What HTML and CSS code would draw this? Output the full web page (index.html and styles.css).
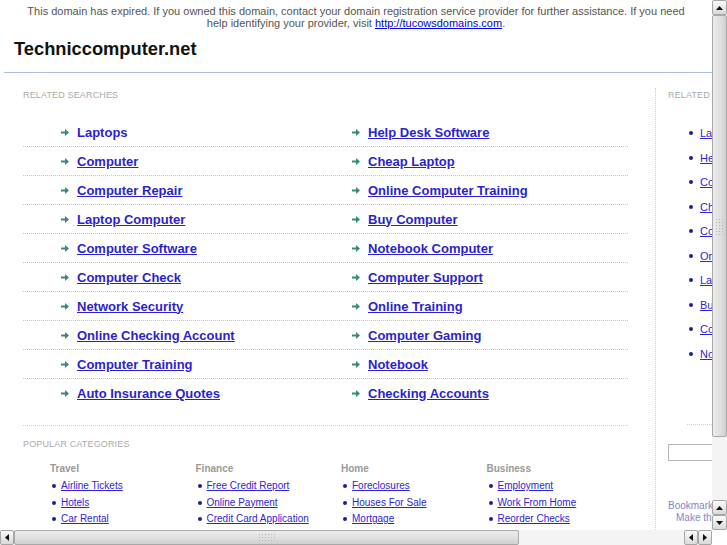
FILE: index.html
```html
<!DOCTYPE html>
<html>
<head>
<meta charset="utf-8">
<title>Techniccomputer.net</title>
<link rel="stylesheet" href="styles.css">
</head>
<body>
<div class="viewport">
  <div class="page">
    <div class="notice">This domain has expired. If you owned this domain, contact your domain registration service provider for further assistance. If you need help identifying your provider, visit <a href="#">http://tucowsdomains.com</a>.</div>
    <div class="header"><h1 class="site-title">Techniccomputer.net</h1></div>
    <div class="main">
      <div class="content">
        <div class="section-title">Related Searches</div>
        <div class="searches">
          <div class="row"><a class="s-link nou" href="#">Laptops</a><a class="s-link" href="#">Help Desk Software</a></div>
          <div class="row"><a class="s-link" href="#">Computer</a><a class="s-link" href="#">Cheap Laptop</a></div>
          <div class="row"><a class="s-link" href="#">Computer Repair</a><a class="s-link" href="#">Online Computer Training</a></div>
          <div class="row"><a class="s-link" href="#">Laptop Computer</a><a class="s-link" href="#">Buy Computer</a></div>
          <div class="row"><a class="s-link" href="#">Computer Software</a><a class="s-link" href="#">Notebook Computer</a></div>
          <div class="row"><a class="s-link" href="#">Computer Check</a><a class="s-link" href="#">Computer Support</a></div>
          <div class="row"><a class="s-link" href="#">Network Security</a><a class="s-link" href="#">Online Training</a></div>
          <div class="row"><a class="s-link" href="#">Online Checking Account</a><a class="s-link" href="#">Computer Gaming</a></div>
          <div class="row"><a class="s-link" href="#">Computer Training</a><a class="s-link" href="#">Notebook</a></div>
          <div class="row last"><a class="s-link" href="#">Auto Insurance Quotes</a><a class="s-link" href="#">Checking Accounts</a></div>
        </div>
        <div class="section-title pop">Popular Categories</div>
        <div class="cats">
          <div class="cat">
            <div class="cat-head">Travel</div>
            <a class="c-link" href="#">Airline Tickets</a>
            <a class="c-link" href="#">Hotels</a>
            <a class="c-link" href="#">Car Rental</a>
          </div>
          <div class="cat">
            <div class="cat-head">Finance</div>
            <a class="c-link" href="#">Free Credit Report</a>
            <a class="c-link" href="#">Online Payment</a>
            <a class="c-link" href="#">Credit Card Application</a>
          </div>
          <div class="cat">
            <div class="cat-head">Home</div>
            <a class="c-link" href="#">Foreclosures</a>
            <a class="c-link" href="#">Houses For Sale</a>
            <a class="c-link" href="#">Mortgage</a>
          </div>
          <div class="cat">
            <div class="cat-head">Business</div>
            <a class="c-link" href="#">Employment</a>
            <a class="c-link" href="#">Work From Home</a>
            <a class="c-link" href="#">Reorder Checks</a>
          </div>
        </div>
      </div>
      <div class="sidebar">
        <div class="section-title side">Related Searches</div>
        <div class="side-list">
          <a class="c-link side-link" href="#">Laptops</a>
          <a class="c-link side-link" href="#">Help Desk Software</a>
          <a class="c-link side-link" href="#">Computer</a>
          <a class="c-link side-link" href="#">Cheap Laptop</a>
          <a class="c-link side-link" href="#">Computer Repair</a>
          <a class="c-link side-link" href="#">Online Computer Training</a>
          <a class="c-link side-link" href="#">Laptop Computer</a>
          <a class="c-link side-link" href="#">Buy Computer</a>
          <a class="c-link side-link" href="#">Computer Software</a>
          <a class="c-link side-link" href="#">Notebook Computer</a>
        </div>
        <div class="side-search"><input class="side-input" type="text"></div>
        <div class="bookmark">Bookmark this page</div>
        <div class="homepage">Make this your homepage</div>
      </div>
    </div>
  </div>

  <div class="vscroll">
    <div class="sb-btn"><svg width="7" height="4" viewBox="0 0 7 4"><path d="M0 4L3.5 0L7 4Z" fill="#111"/></svg></div>
    <div class="v-thumb"><div class="grip v-grip"></div></div>
    <div class="v-track"></div>
    <div class="sb-btn"><svg width="7" height="4" viewBox="0 0 7 4"><path d="M0 4L3.5 0L7 4Z" fill="#111"/></svg></div>
    <div class="sb-btn"><svg width="7" height="4" viewBox="0 0 7 4"><path d="M0 0L3.5 4L7 0Z" fill="#111"/></svg></div>
  </div>
  <div class="hscroll">
    <div class="sb-btn h"><svg width="4" height="7" viewBox="0 0 4 7"><path d="M4 0L0 3.5L4 7Z" fill="#111"/></svg></div>
    <div class="h-thumb"><div class="grip h-grip"></div></div>
    <div class="h-track"></div>
    <div class="sb-btn h"><svg width="4" height="7" viewBox="0 0 4 7"><path d="M4 0L0 3.5L4 7Z" fill="#111"/></svg></div>
    <div class="sb-btn h"><svg width="4" height="7" viewBox="0 0 4 7"><path d="M0 0L4 3.5L0 7Z" fill="#111"/></svg></div>
  </div>
  <div class="corner"></div>
</div>
</body>
</html>
```

FILE: styles.css
```css
html, body {
  margin: 0;
  padding: 0;
  width: 727px;
  height: 545px;
  overflow: hidden;
  background: #fff;
  font-family: "Liberation Sans", Arial, sans-serif;
}

.viewport {
  position: relative;
  width: 727px;
  height: 545px;
  overflow: hidden;
}

.page {
  width: 712px;
  height: 530px;
  overflow: hidden;
}

.notice {
  width: 676px;
  margin: 0 auto;
  padding-top: 5px;
  font-size: 11px;
  line-height: 12px;
  color: #555;
  text-align: center;
}

.notice a {
  color: #0000ee;
}

.header {
  margin-left: 4px;
  width: 900px;
  border-bottom: 1px solid #a9bde3;
  padding: 9px 0 0 10px;
  height: 34px;
}

.site-title {
  margin: 0;
  font-size: 18.3px;
  line-height: 22px;
  font-weight: bold;
  color: #111;
}

.main {
  display: flex;
  margin-left: 4px;
  margin-top: 15px;
  width: 900px;
}

.content {
  width: 651px;
  flex: none;
}

.section-title {
  font-size: 9px;
  line-height: 12px;
  color: #aaa;
  text-transform: uppercase;
  letter-spacing: 0.15px;
  margin-left: 19px;
  margin-top: 1px;
}

.searches {
  margin-left: 19px;
  margin-top: 17px;
  width: 605px;
  padding-bottom: 18px;
  border-bottom: 1px dotted #c3d0ec;
}

.row {
  display: grid;
  grid-template-columns: 291px 276px;
  padding-left: 38px;
  height: 28px;
  align-items: center;
  border-bottom: 1px dotted #b6c6e8;
}

.row.last {
  border-bottom: none;
}

.s-link {
  display: flex;
  align-items: center;
  font-size: 13px;
  font-weight: bold;
  color: #2b1fd0;
  text-decoration: underline;
  justify-self: start;
}

.s-link::before {
  content: "";
  width: 8px;
  height: 7px;
  margin-right: 8px;
  flex: none;
  background: url("data:image/svg+xml;utf8,<svg xmlns='http://www.w3.org/2000/svg' width='8' height='7' viewBox='0 0 8 7'><path d='M0 2.5H4V0L8 3.5L4 7V4.5H0Z' fill='%23358a7a'/></svg>") no-repeat;
}

.s-link.nou {
  text-decoration: none;
}

.section-title.pop {
  margin-top: 12px;
}

.cats {
  display: grid;
  grid-template-columns: repeat(4, 145.5px);
  margin-left: 46px;
  margin-top: 12px;
}

.cat {
  display: flex;
  flex-direction: column;
}

.cat-head {
  font-size: 10px;
  font-weight: bold;
  color: #999;
  line-height: 14px;
  margin-bottom: 2px;
}

.c-link {
  display: flex;
  align-items: center;
  font-size: 10px;
  line-height: 16.5px;
  color: #2f24d8;
  text-decoration: underline;
  align-self: flex-start;
}

.c-link::before {
  content: "";
  width: 4px;
  height: 4px;
  border-radius: 2px;
  background: #1e1e8c;
  margin-left: 2px;
  margin-right: 5px;
  flex: none;
}

.sidebar {
  flex: none;
  width: 200px;
  border-left: 1px dotted #c3d0ec;
  padding-left: 12px;
  height: 500px;
}

.section-title.side {
  margin-left: 0;
}

.side-list {
  margin-top: 24px;
  margin-left: 19px;
  padding-bottom: 62px;
  border-bottom: 1px dotted #c3d0ec;
  display: flex;
  flex-direction: column;
  gap: 8px;
}

.side-link {
  font-size: 11px;
  line-height: 16.5px;
}

.side-link::before {
  margin-right: 7px;
}

.side-search {
  margin-top: 19px;
  height: 17px;
}

.side-input {
  display: block;
  width: 150px;
  height: 17px;
  box-sizing: border-box;
  border: 1px solid #b5b5b5;
  margin: 0;
  padding: 0;
}

.bookmark {
  margin-top: 39px;
  font-size: 10px;
  line-height: 12px;
  color: #8585c9;
}

.homepage {
  margin-left: 8px;
  font-size: 10px;
  line-height: 12px;
  color: #8585c9;
}

/* fake browser scrollbars */
.vscroll {
  position: absolute;
  left: 712px;
  top: 0;
  width: 15px;
  height: 530px;
  display: flex;
  flex-direction: column;
  background: #f1f1f1;
}

.hscroll {
  position: absolute;
  left: 0;
  top: 530px;
  width: 712px;
  height: 15px;
  display: flex;
  background: #f1f1f1;
}

.corner {
  position: absolute;
  left: 712px;
  top: 530px;
  width: 15px;
  height: 15px;
  background: #fff;
}

.sb-btn {
  width: 15px;
  height: 15px;
  flex: none;
  box-sizing: border-box;
  border: 1px solid #a6a6a6;
  border-radius: 2px;
  background: linear-gradient(#fafafa, #d9d9d9);
  display: flex;
  align-items: center;
  justify-content: center;
}

.sb-btn.h {
  width: 14px;
}

.v-thumb {
  height: 422px;
  flex: none;
  box-sizing: border-box;
  border: 1px solid #a8a8a8;
  border-radius: 2px;
  background: linear-gradient(90deg, #ececec, #dedede 60%, #cfcfcf);
  display: flex;
  align-items: center;
  justify-content: center;
}

.v-track {
  flex: 1;
  background-color: #f4f4f4;
  background-image: radial-gradient(#dcdcdc 0.5px, transparent 0.6px);
  background-size: 2px 2px;
}

.h-thumb {
  width: 505px;
  flex: none;
  box-sizing: border-box;
  border: 1px solid #a8a8a8;
  border-radius: 2px;
  background: linear-gradient(#ececec, #dedede 60%, #cfcfcf);
  display: flex;
  align-items: center;
  justify-content: center;
}

.h-track {
  flex: 1;
  background-color: #f4f4f4;
  background-image: radial-gradient(#dcdcdc 0.5px, transparent 0.6px);
  background-size: 2px 2px;
}

.grip {
  background-image: radial-gradient(#b5b5b5 0.6px, transparent 0.8px);
  background-size: 3px 3px;
}

.v-grip {
  width: 9px;
  height: 17px;
}

.h-grip {
  width: 17px;
  height: 9px;
}
```
